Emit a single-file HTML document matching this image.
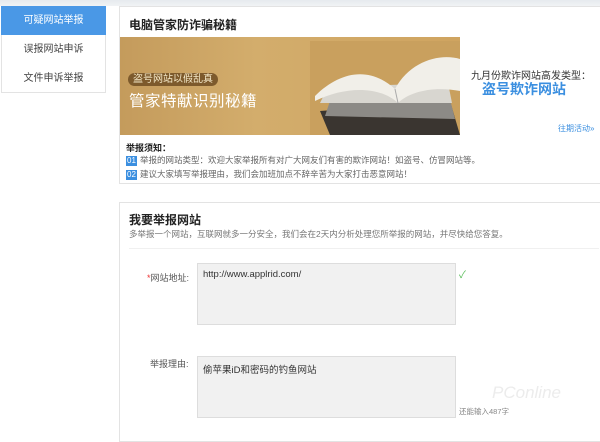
<!DOCTYPE html>
<html><head><meta charset="utf-8"><style>
*{margin:0;padding:0;box-sizing:border-box}
body{width:600px;height:433px;overflow:hidden;background:#fff;font-family:"Liberation Sans","Noto Sans CJK SC",sans-serif;position:relative;color:#333}
.top{position:absolute;left:0;top:0;width:600px;height:6px;background:linear-gradient(#e6eaee,#f1f3f5)}
.nav{position:absolute;left:1px;top:6px;width:105px;height:87px;border:1px solid #e3e3e3;background:#fff}
.nav div{height:29px;line-height:29px;text-align:center;font-size:10px;color:#444}
.nav .a{background:#4a98e6;color:#fff;margin:-1px -1px 0 -1px}
.p1{position:absolute;left:119px;top:6px;width:482px;height:178px;border:1px solid #e3e3e3;background:#fff}
.t1{position:absolute;left:9px;top:9px;font-size:12px;font-weight:bold;color:#222}
.ban{position:absolute;left:0;top:30px;width:340px;height:98px;background:linear-gradient(90deg,#c49b5c 0%,#d3ad6c 40%,#cfa460 100%)}
.tag{position:absolute;left:8px;top:36px;font-size:10px;color:#f5e9c9;background:#7d5a2c;border-radius:8px;padding:0 5px;line-height:13px}
.big{position:absolute;left:9px;top:52px;font-size:15.5px;color:#fff;letter-spacing:0.5px}
.book{position:absolute;left:190px;top:4px;width:150px;height:94px}
.side{position:absolute;left:341px;top:30px;width:140px;height:98px;background:#fff}
.s1{position:absolute;left:10px;top:30px;font-size:10px;color:#333}
.s2{position:absolute;left:21px;top:42px;font-size:14px;color:#3b8fe0;font-weight:bold}
.s3{position:absolute;left:97px;top:86px;font-size:8px;color:#3b8fe0}
.n{position:absolute;left:6px;font-size:8.5px;color:#666}
.n b{display:inline-block;background:#3b8fe0;color:#fff;font-weight:normal;width:11px;height:10px;line-height:10px;text-align:center;font-size:8px;margin-right:3px}
.p2{position:absolute;left:119px;top:202px;width:482px;height:240px;border:1px solid #e3e3e3;background:#fff}
.h2{position:absolute;left:9px;top:8px;font-size:12px;font-weight:bold;color:#222}
.sub{position:absolute;left:9px;top:25px;font-size:8.5px;color:#777}
.sep{position:absolute;left:9px;top:45px;width:470px;border-top:1px solid #f0f0f0}
.lab{position:absolute;font-size:9px;color:#555}
.ta{position:absolute;left:77px;width:259px;background:#f1f1f1;border:1px solid #ddd;font-size:9.5px;color:#333;padding:5px 5px}
</style></head><body>
<div class="top"></div>
<div class="nav"><div class="a">可疑网站举报</div><div>误报网站申诉</div><div>文件申诉举报</div></div>
<div class="p1">
<div class="t1">电脑管家防诈骗秘籍</div>
<div class="ban">
<div class="tag">盗号网站以假乱真</div>
<div class="big">管家特献识别秘籍</div>
<svg class="book" viewBox="0 0 150 94"><rect x="0" y="0" width="150" height="94" fill="#c9a05e"/><polygon points="20,94 10,70 140,60 150,94" fill="#3a3530"/><polygon points="15,75 20,60 140,58 145,78" fill="#8c8a86"/><polygon points="10,62 18,46 138,42 142,62" fill="#d8d6d0"/><path d="M5,55 C30,30 60,25 85,48 C100,20 130,12 150,18 L150,50 C125,45 100,50 88,62 C70,45 35,45 5,60Z" fill="#f1efe9"/><path d="M85,48 L88,62" stroke="#aaa" fill="none"/></svg>
</div>
<div class="side"><div class="s1">九月份欺诈网站高发类型：</div><div class="s2">盗号欺诈网站</div><div class="s3">往期活动»</div></div>
<div class="n" style="top:134px;font-weight:bold;color:#222;font-size:9px">举报须知：</div>
<div class="n" style="top:147px"><b>01</b>举报的网站类型：欢迎大家举报所有对广大网友们有害的欺诈网站！如盗号、仿冒网站等。</div>
<div class="n" style="top:161px"><b>02</b>建议大家填写举报理由，我们会加班加点不辞辛苦为大家打击恶意网站！</div>
</div>
<div class="p2">
<div class="h2">我要举报网站</div>
<div class="sub">多举报一个网站，互联网就多一分安全，我们会在2天内分析处理您所举报的网站，并尽快给您答复。</div>
<div class="sep"></div>
<div class="lab" style="left:27px;top:68px"><span style="color:#e33">*</span>网站地址:</div>
<div class="ta" style="top:60px;height:62px">http://www.applrid.com/</div>
<div class="lab" style="left:339px;top:63px;color:#5b5;font-size:10px">✓</div>
<div class="lab" style="left:30px;top:154px">举报理由:</div>
<div class="ta" style="top:153px;height:62px">偷苹果iD和密码的钓鱼网站</div>
<div class="lab" style="left:339px;top:203px;font-size:7.5px;color:#888">还能输入487字</div>
<div class="lab" style="left:372px;top:180px;font-size:17px;color:#ececec;font-style:italic">PConline</div>
</div>
</body></html>
